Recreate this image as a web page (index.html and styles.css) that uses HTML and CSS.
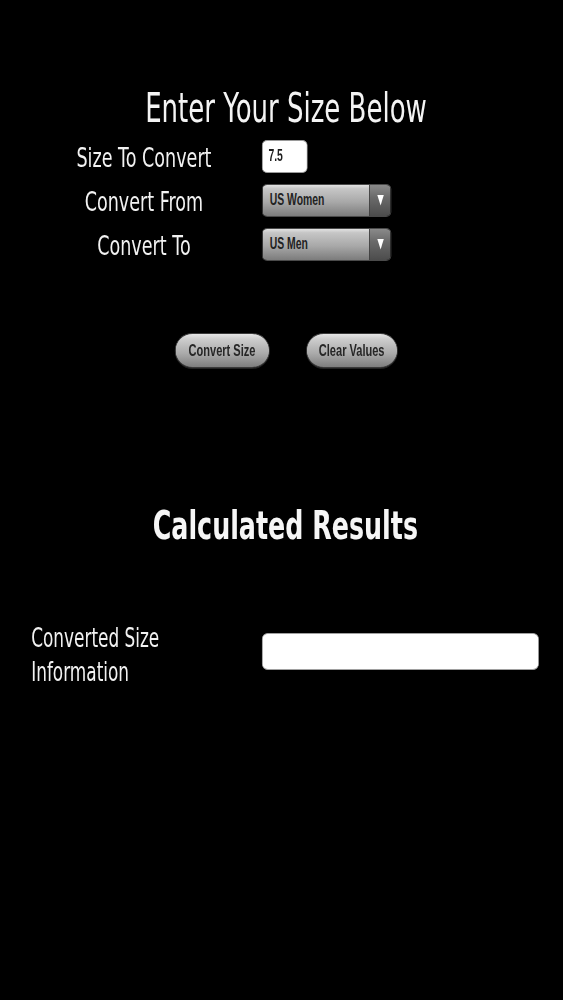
FILE: index.html
```html
<!DOCTYPE html>
<html lang="en">
<head>
<meta charset="utf-8">
<title>Size Converter</title>
<link rel="stylesheet" href="styles.css">
</head>
<body>
<div class="viewport">
  <div class="screen">
    <h1 class="title">Enter Your Size Below</h1>

    <div class="form">
      <div class="label">Size To Convert</div>
      <div class="control"><input class="size-input" type="text" value="7.5"></div>

      <div class="label">Convert From</div>
      <div class="control">
        <div class="select">
          <span class="select-value">US Women</span>
          <span class="select-arrow"><svg viewBox="0 0 11 12" width="11" height="12"><path d="M0.5 1 H10.5 L5.5 11.5 Z" fill="#fff"/></svg></span>
        </div>
      </div>

      <div class="label">Convert To</div>
      <div class="control">
        <div class="select">
          <span class="select-value">US Men</span>
          <span class="select-arrow"><svg viewBox="0 0 11 12" width="11" height="12"><path d="M0.5 1 H10.5 L5.5 11.5 Z" fill="#fff"/></svg></span>
        </div>
      </div>
    </div>

    <div class="actions">
      <button class="btn btn-convert" type="button">Convert Size</button>
      <button class="btn btn-clear" type="button">Clear Values</button>
    </div>

    <h2 class="results-title">Calculated Results</h2>

    <div class="result-row">
      <div class="result-label">Converted Size Information</div>
      <div class="result-box"></div>
    </div>
  </div>
</div>
</body>
</html>
```

FILE: styles.css
```css
html, body {
  margin: 0;
  padding: 0;
  background: #000;
}

body {
  font-family: "DejaVu Sans", Verdana, sans-serif;
  color: #f2f2f2;
}

.viewport {
  width: 563px;
  height: 1000px;
  overflow: hidden;
}

/* the original screen is horizontally compressed */
.screen {
  width: 866px;
  padding-top: 84px;
  transform: scaleX(0.65);
  transform-origin: 0 0;
}

.title {
  margin: 0;
  padding-left: 14px;
  text-align: center;
  font-size: 40px;
  line-height: 48px;
  font-weight: normal;
  color: #f4f4f4;
}

.form {
  margin-top: 2px;
  padding-left: 48px;
  display: grid;
  grid-template-columns: 347px 1fr;
  column-gap: 8px;
  grid-auto-rows: 44px;
  align-items: center;
}

.label {
  text-align: center;
  font-size: 27px;
  line-height: 33px;
  padding-top: 2px;
  white-space: nowrap;
}

.control {
  display: flex;
  align-items: center;
}

.size-input {
  box-sizing: border-box;
  width: 70px;
  height: 33px;
  margin: 0;
  padding: 0 0 0 9px;
  border: 1px solid #9a9a9a;
  border-radius: 8px / 5px;
  background: #fff;
  font-family: "Liberation Sans", Arial, sans-serif;
  font-weight: bold;
  font-size: 16px;
  color: #1e1e1e;
  outline: none;
}

.select {
  box-sizing: border-box;
  width: 199px;
  height: 33px;
  display: flex;
  border: 1px solid #4a4a4a;
  border-radius: 8px / 5px;
  overflow: hidden;
  font-family: "Liberation Sans", Arial, sans-serif;
  font-weight: bold;
  font-size: 16px;
  color: #222;
}

.select-value {
  flex: 1;
  display: flex;
  align-items: center;
  padding-left: 11px;
  background: linear-gradient(to bottom, #e2e2e2 0%, #c6c6c6 12%, #a8a8a8 55%, #7c7c7c 100%);
}

.select-arrow {
  width: 32px;
  display: flex;
  align-items: center;
  justify-content: center;
  border-left: 1px solid #555;
  background: linear-gradient(to bottom, #8a8a8a 0%, #6a6a6a 40%, #4c4c4c 100%);
}

.select-arrow svg {
  display: block;
}

.actions {
  margin-top: 67px;
  padding-left: 14px;
  display: flex;
  justify-content: center;
  column-gap: 56px;
}

.btn {
  box-sizing: border-box;
  height: 35px;
  margin: 0;
  padding: 0;
  border: 1px solid #3a3a3a;
  border-radius: 27px / 17.5px;
  background: linear-gradient(to bottom, #e6e6e6 0%, #cdcdcd 15%, #a9a9a9 60%, #7e7e7e 100%);
  font-family: "Liberation Sans", Arial, sans-serif;
  font-weight: bold;
  font-size: 17px;
  color: #262626;
  box-shadow: 0 1px 0 #222;
}

.btn-convert {
  width: 146px;
}

.btn-clear {
  width: 141px;
}

.results-title {
  margin: 135px 0 0;
  padding-left: 12px;
  text-align: center;
  font-size: 39px;
  line-height: 46px;
  font-weight: bold;
  color: #f6f6f6;
}

.result-row {
  margin-top: 72px;
  padding-left: 48px;
  display: grid;
  grid-template-columns: 300px 426px;
  column-gap: 55px;
  align-items: start;
}

.result-label {
  font-size: 26px;
  line-height: 34px;
}

.result-box {
  box-sizing: border-box;
  height: 37px;
  margin-top: 12px;
  background: #fff;
  border: 1px solid #a0a0a0;
  border-radius: 9px / 6px;
}
```
